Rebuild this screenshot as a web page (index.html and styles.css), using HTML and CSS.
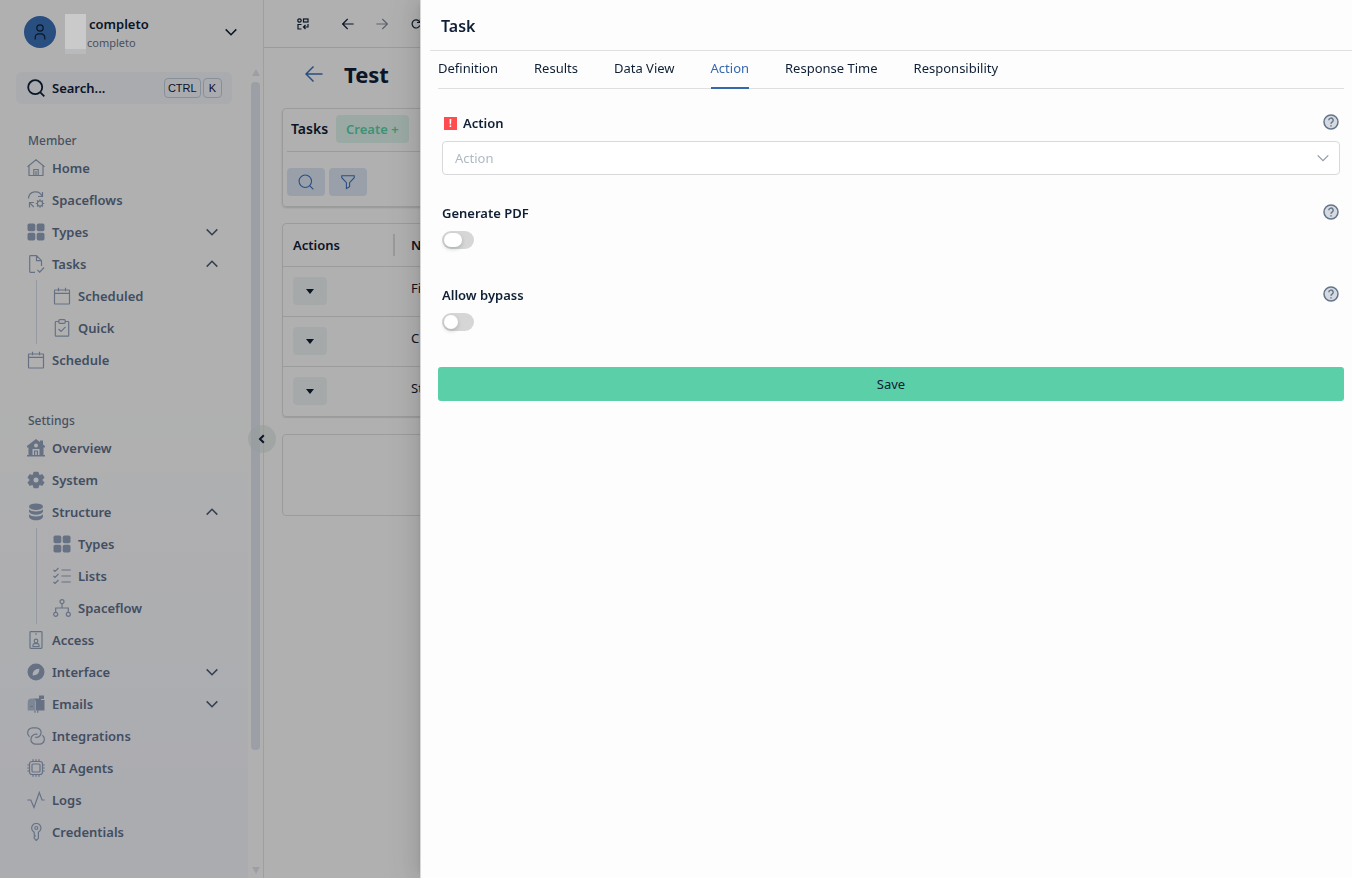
FILE: index.html
```html
<!DOCTYPE html>
<html lang="en">
<head>
    <meta charset="UTF-8">
    <meta name="viewport" content="width=device-width, initial-scale=1.0">
    <title>Task - Test</title>
    <link rel="stylesheet" href="styles.css">
</head>
<body>
    <!-- Icon set -->
    <svg class="sprite" aria-hidden="true">
        <symbol id="i-user" viewBox="0 0 18 18"><circle cx="9" cy="5" r="3.2"/><path d="M4.2 16.5v-2a3.6 3.6 0 0 1 3.6-3.6h2.4a3.6 3.6 0 0 1 3.6 3.6v2"/></symbol>
        <symbol id="i-down" viewBox="0 0 12 12"><path d="M.7 3.4 6 8.7l5.3-5.3"/></symbol>
        <symbol id="i-up" viewBox="0 0 12 12"><path d="M.7 8.6 6 3.3l5.3 5.3"/></symbol>
        <symbol id="i-search" viewBox="0 0 18 18"><circle cx="8.2" cy="8.2" r="7"/><path d="m13.3 13.3 4 4"/></symbol>
        <symbol id="i-home" viewBox="0 0 18 18"><path d="M.5 7.8 9 .8l8.5 7M2 7v9.500h14V7M6.800 16.500v-6h4.400v6M9 12v4.500"/></symbol>
        <symbol id="i-flow" viewBox="0 0 18 18"><path d="M1.500 7.500a7 7 0 0 1 13.500-2.200M15.500 1v4.500H11M2.500 16.500v-5H7M2.800 11.800l4 4.200"/><circle cx="13" cy="12.500" r="2.600"/><path d="M13 8.300v1.600M13 15.100v1.600M8.800 12.500h1.600M15.600 12.500h1.700M10 9.500l1.200 1.200M14.800 14.300l1.200 1.200M16 9.500l-1.200 1.200M11.200 14.300 10 15.500"/></symbol>
        <symbol id="i-grid" viewBox="0 0 18 18"><g class="solid"><rect x=".5" y=".5" width="7.800" height="7.800" rx="1.800"/><rect x="9.700" y=".5" width="7.800" height="7.800" rx="1.800"/><rect x=".5" y="9.700" width="7.800" height="7.800" rx="1.800"/><rect x="9.700" y="9.700" width="7.800" height="7.800" rx="1.800"/></g></symbol>
        <symbol id="i-file" viewBox="0 0 18 18"><path d="M8 17.300H3.500a.8.8 0 0 1-.8-.8v-15a.8.8 0 0 1 .8-.8h6l5 5V11M9.500.7v5h5M10.500 15l2.200 2.200 4.300-4.700"/></symbol>
        <symbol id="i-calendar" viewBox="0 0 18 18"><path d="M2 3h14a.5.5 0 0 1 .5.5v13a.5.5 0 0 1-.5.5H2a.5.5 0 0 1-.5-.5v-13A.5.5 0 0 1 2 3zM1.500 6.300h15M5.500.8v3.500M12.500.8v3.500"/></symbol>
        <symbol id="i-clipboard" viewBox="0 0 18 18"><path d="M5.500 2.500H3a.7.7 0 0 0-.7.7v13.300a.7.7 0 0 0 .7.7h12a.7.7 0 0 0 .7-.7V3.200a.7.7 0 0 0-.7-.7h-2.500M6.800.7h4.400a1 1 0 0 1 1 1v1.600a1 1 0 0 1-1 1H6.800a1 1 0 0 1-1-1V1.700a1 1 0 0 1 1-1zM5.500 10l2.500 2.500 4.500-4.700"/></symbol>
        <symbol id="i-house" viewBox="0 0 18 18"><path class="solid" fill-rule="evenodd" d="M9 0l4 3V1.500h3v4L18 7v1.500h-1.500V16H18v1.500H0V16h1.500V8.500H0V7zM9 4.500a2 2 0 1 0 0 4 2 2 0 0 0 0-4zM5.500 10v6H7v-4.500h4V16h1.500v-6zM8.200 12.500V16h1.600v-3.500z"/></symbol>
        <symbol id="i-gear" viewBox="0 0 18 18"><path class="solid gear" fill-rule="evenodd" d="M7 1.300h4l.5 2.400 1.300.8 2.300-.8 1.700 2.900-1.800 1.600v1.600l1.800 1.600-1.700 2.900-2.300-.8-1.300.8-.5 2.400H7l-.5-2.400-1.300-.8-2.300.8-1.700-2.900L3 9.800V8.200L1.200 6.600l1.700-2.900 2.300.8 1.300-.8zM9 5.900a3.100 3.100 0 1 0 0 6.200 3.100 3.100 0 0 0 0-6.200z"/></symbol>
        <symbol id="i-database" viewBox="0 0 18 18"><g class="solid"><ellipse cx="9" cy="3.700" rx="7" ry="3.300"/><path d="M2 6.200c2.500 3 11.500 3 14 0v2.500c-1.500 4-12.500 4-14 0z"/><path d="M2 11.200c2.500 3 11.500 3 14 0v2.700c-1.500 4.500-12.500 4.500-14 0z"/></g></symbol>
        <symbol id="i-list" viewBox="0 0 18 18"><path d="M.5 3l1.500 1.500 3.500-3.500M.5 9l1.500 1.500L5.500 7M.5 15l1.500 1.500L5.500 13M8.500 3h9.300M8.500 9h9.300M8.500 15h9.300"/></symbol>
        <symbol id="i-tree" viewBox="0 0 18 18"><circle cx="9" cy="2.700" r="2"/><circle cx="2.700" cy="15.300" r="2"/><circle cx="15.300" cy="15.300" r="2"/><path d="M9 4.700V9M2.700 13.300V9h12.600v4.300"/></symbol>
        <symbol id="i-badge" viewBox="0 0 18 18"><rect x="3" y=".7" width="12" height="16.600" rx=".8"/><path d="M8 3h2M6 15.500v-1.300a1.500 1.500 0 0 1 1.500-1.500h3a1.500 1.500 0 0 1 1.500 1.500v1.300z"/><circle cx="9" cy="10" r="1.800"/></symbol>
        <symbol id="i-compass" viewBox="0 0 18 18"><path class="solid" fill-rule="evenodd" d="M9 .5a8.500 8.500 0 1 0 0 17 8.500 8.500 0 0 0 0-17zM12.300 5.700c.2 3-1 6.300-5.300 6.600l-1.300.1c-.2-3.700 1.800-6.700 6.600-6.700z"/></symbol>
        <symbol id="i-mailbox" viewBox="0 0 18 18"><path class="solid" d="M4.500 3.500H12V.5h5v3.500h-3v1h3.500v10.500H9V8a4 4 0 0 0-4.500-4.500z"/><path class="tint" d="M.7 7.500a3.900 3.900 0 0 1 7.800 0v8H.7z"/><path d="M3 11.500h3M8 15.500v2.300M10.800 15.500v2.300"/></symbol>
        <symbol id="i-link" viewBox="0 0 18 18"><path d="M2.600 9.800A4.800 4.800 0 0 1 .7 5.600 4.800 4.800 0 0 1 5.500.8h3.800a4.800 4.800 0 0 1 0 9.600H8.200M15.400 8.200a4.800 4.800 0 0 1 1.900 4.200 4.800 4.800 0 0 1-4.800 4.800H8.700a4.800 4.800 0 0 1-4.800-4.800 5.200 5.200 0 0 1 5.100-5.200h1.500"/></symbol>
        <symbol id="i-chip" viewBox="0 0 18 18"><rect x="2.500" y="2.500" width="13" height="13" rx="2.500"/><rect x="5" y="5" width="8" height="8" rx="1"/><path d="M6 .3v2M9 .3v2M12 .3v2M6 15.700v2M9 15.700v2M12 15.700v2M.3 6h2M.3 9h2M.3 12h2M15.700 6h2M15.700 9h2M15.700 12h2"/></symbol>
        <symbol id="i-pulse" viewBox="0 0 18 18"><path d="M.3 9h3.500l3.200 7.500L12.300 1.500 15 9h2.700"/></symbol>
        <symbol id="i-key" viewBox="0 0 18 18"><path d="M7.200 9.200a4.600 4.600 0 1 1 4.200 0v6.100l-2.100 2.200-2.100-2.200v-1.500l1-.8-1-1z"/><circle cx="9.300" cy="5" r="1.500"/></symbol>
        <symbol id="i-panel" viewBox="0 0 12 12"><circle cx="2.500" cy="2.500" r="1.700"/><rect x="6.500" y="1" width="4.500" height="3"/><path d="M4.500 6.500H1v4.500h3.500M11 6v3H6.500M8.500 7l-2 2 2 2"/></symbol>
        <symbol id="i-left" viewBox="0 0 18 18"><path d="M17.500 9H1M8.500 1.500 1 9l7.500 7.500"/></symbol>
        <symbol id="i-right" viewBox="0 0 18 18"><path d="M.5 9H17M9.500 1.500 17 9l-7.500 7.500"/></symbol>
        <symbol id="i-reload" viewBox="0 0 12 12"><path d="M9.800 7.500A4 4 0 1 1 9 3.200L10.300 4.500M10.300 1.300v3.200H7"/></symbol>
        <symbol id="i-filter" viewBox="0 0 18 18"><path d="M2 2h14v2.200l-5.200 5.500v4.600l-3.600 2V9.700L2 4.200z"/></symbol>
        <symbol id="i-help" viewBox="0 0 16 16"><circle cx="8" cy="8" r="7"/><path d="M5.800 6.300a2.200 2.200 0 1 1 3.300 1.900C8.300 8.700 8 9 8 9.800M8 11.200v1.300"/></symbol>
    </svg>

    <div class="app">
        <aside class="sidebar">
            <div class="user">
                <span class="avatar"><svg class="icon"><use href="#i-user"/></svg></span>
                <span class="user-mask"></span>
                <div class="user-text">
                    <strong>completo</strong>
                    <small>completo</small>
                </div>
                <svg class="icon chevron"><use href="#i-down"/></svg>
            </div>

            <div class="sidebar-body">
                <nav class="nav">
                    <button type="button" class="search">
                        <svg class="icon"><use href="#i-search"/></svg>
                        <span>Search...</span>
                        <kbd>CTRL</kbd>
                        <kbd>K</kbd>
                    </button>

                    <div class="nav-section">
                        <h2>Member</h2>
                        <a href="#"><svg class="icon"><use href="#i-home"/></svg>Home</a>
                        <a href="#"><svg class="icon"><use href="#i-flow"/></svg>Spaceflows</a>
                        <a href="#"><svg class="icon"><use href="#i-grid"/></svg>Types<svg class="icon chevron"><use href="#i-down"/></svg></a>
                        <a href="#"><svg class="icon"><use href="#i-file"/></svg>Tasks<svg class="icon chevron"><use href="#i-up"/></svg></a>
                        <div class="submenu">
                            <a href="#"><svg class="icon"><use href="#i-calendar"/></svg>Scheduled</a>
                            <a href="#"><svg class="icon"><use href="#i-clipboard"/></svg>Quick</a>
                        </div>
                        <a href="#"><svg class="icon"><use href="#i-calendar"/></svg>Schedule</a>
                    </div>

                    <div class="nav-section">
                        <h2>Settings</h2>
                        <a href="#"><svg class="icon"><use href="#i-house"/></svg>Overview</a>
                        <a href="#"><svg class="icon"><use href="#i-gear"/></svg>System</a>
                        <a href="#"><svg class="icon"><use href="#i-database"/></svg>Structure<svg class="icon chevron"><use href="#i-up"/></svg></a>
                        <div class="submenu">
                            <a href="#"><svg class="icon"><use href="#i-grid"/></svg>Types</a>
                            <a href="#"><svg class="icon"><use href="#i-list"/></svg>Lists</a>
                            <a href="#"><svg class="icon"><use href="#i-tree"/></svg>Spaceflow</a>
                        </div>
                        <a href="#"><svg class="icon"><use href="#i-badge"/></svg>Access</a>
                        <a href="#"><svg class="icon"><use href="#i-compass"/></svg>Interface<svg class="icon chevron"><use href="#i-down"/></svg></a>
                        <a href="#"><svg class="icon"><use href="#i-mailbox"/></svg>Emails<svg class="icon chevron"><use href="#i-down"/></svg></a>
                        <a href="#"><svg class="icon"><use href="#i-link"/></svg>Integrations</a>
                        <a href="#"><svg class="icon"><use href="#i-chip"/></svg>AI Agents</a>
                        <a href="#"><svg class="icon"><use href="#i-pulse"/></svg>Logs</a>
                        <a href="#"><svg class="icon"><use href="#i-key"/></svg>Credentials</a>
                    </div>
                </nav>
                <div class="scrollbar">
                    <span class="arrow-up"></span>
                    <span class="thumb"></span>
                    <span class="arrow-down"></span>
                </div>
            </div>
            <button type="button" class="collapse" aria-label="Collapse menu">
                <svg viewBox="0 0 10 10"><path d="M6.800 1.200 3 5l3.800 3.800"/></svg>
            </button>
        </aside>

        <main class="main">
            <div class="toolbar">
                <button type="button" aria-label="Tabs"><svg class="icon"><use href="#i-panel"/></svg></button>
                <button type="button" aria-label="Back"><svg class="icon"><use href="#i-left"/></svg></button>
                <button type="button" aria-label="Forward" disabled><svg class="icon"><use href="#i-right"/></svg></button>
                <button type="button" aria-label="Reload"><svg class="icon"><use href="#i-reload"/></svg></button>
            </div>
            <div class="page-title">
                <a href="#" aria-label="Go back"><svg class="icon"><use href="#i-left"/></svg></a>
                <h1>Test</h1>
            </div>
            <section class="card tasks">
                <div class="tasks-head">
                    <h2>Tasks</h2>
                    <button type="button" class="create">Create +</button>
                </div>
                <div class="tasks-tools">
                    <button type="button" aria-label="Search"><svg class="icon"><use href="#i-search"/></svg></button>
                    <button type="button" aria-label="Filter"><svg class="icon"><use href="#i-filter"/></svg></button>
                </div>
            </section>
            <div class="card table-card">
                <table>
                    <thead>
                        <tr><th class="col-actions">Actions</th><th>Name</th></tr>
                    </thead>
                    <tbody>
                        <tr><td><button type="button" class="menu" aria-label="Actions"></button></td><td>First</td></tr>
                        <tr><td><button type="button" class="menu" aria-label="Actions"></button></td><td>Check</td></tr>
                        <tr><td><button type="button" class="menu" aria-label="Actions"></button></td><td>Start</td></tr>
                    </tbody>
                </table>
            </div>
            <div class="card blank"></div>
        </main>
    </div>

    <div class="overlay"></div>

    <div class="drawer" role="dialog" aria-labelledby="drawer-title">
        <header class="drawer-head">
            <h2 id="drawer-title">Task</h2>
        </header>
        <div class="drawer-body">
            <nav class="tabs">
                <a href="#">Definition</a>
                <a href="#">Results</a>
                <a href="#">Data View</a>
                <a href="#" class="active">Action</a>
                <a href="#">Response Time</a>
                <a href="#">Responsibility</a>
            </nav>
            <form>
                <div class="field">
                    <div class="field-head">
                        <span class="required">!</span>
                        <label for="action">Action</label>
                        <button type="button" class="help" aria-label="Help"><svg class="icon"><use href="#i-help"/></svg></button>
                    </div>
                    <div class="select">
                        <select id="action" name="action">
                            <option value="">Action</option>
                        </select>
                        <svg class="icon chevron"><use href="#i-down"/></svg>
                    </div>
                </div>
                <div class="field">
                    <div class="field-head">
                        <label for="pdf">Generate PDF</label>
                        <button type="button" class="help" aria-label="Help"><svg class="icon"><use href="#i-help"/></svg></button>
                    </div>
                    <input type="checkbox" class="switch pressed" id="pdf" name="pdf">
                </div>
                <div class="field">
                    <div class="field-head">
                        <label for="bypass">Allow bypass</label>
                        <button type="button" class="help" aria-label="Help"><svg class="icon"><use href="#i-help"/></svg></button>
                    </div>
                    <input type="checkbox" class="switch" id="bypass" name="bypass">
                </div>
                <button type="submit" class="save">Save</button>
            </form>
        </div>
    </div>
</body>
</html>
```
FILE: styles.css
```css
* {
    box-sizing: border-box;
}

body, h1, h2, button, input, select {
    margin: 0;
    padding: 0;
    font-family: "Noto Sans", "Open Sans", sans-serif;
}

body {
    height: 100vh;
    overflow: hidden;
    background: #fdfdfd;
    color: #0f2036;
    font-size: 13px;
    line-height: 20px;
}

a {
    color: inherit;
    text-decoration: none;
}

button {
    border: none;
    background: none;
    color: inherit;
    cursor: pointer;
}

.sprite {
    display: none;
}

/* Icons */
.icon {
    display: block;
    flex: none;
    width: 18px;
    height: 18px;
    fill: none;
    stroke: currentColor;
    stroke-width: 1.2;
}

.icon.chevron {
    width: 12px;
    height: 12px;
    margin-left: auto;
    stroke-width: 1.5;
}

.solid {
    fill: currentColor;
    stroke: none;
}

.gear {
    stroke: currentColor;
    stroke-linejoin: round;
}

.tint {
    fill: #b4c2d6;
    stroke: none;
}

.app {
    display: flex;
    height: 100%;
}

/* Sidebar */
.sidebar {
    position: relative;
    display: flex;
    flex-direction: column;
    flex: none;
    width: 264px;
    border-right: 1px solid #e2e4e8;
    background: linear-gradient(#fdfdfd 40%, #f4f6fd);
}

.user {
    display: flex;
    align-items: center;
    height: 64px;
    padding: 0 26px 0 24px;
}

.avatar {
    display: flex;
    align-items: center;
    justify-content: center;
    width: 32px;
    height: 32px;
    border-radius: 50%;
    background: #3b70b8;
}

.user-mask {
    position: relative;
    z-index: 2;
    width: 21px;
    height: 40px;
    margin: 4px 1px 0 9px;
    background: #cacaca;
    box-shadow: inset 0 -5px #b9babc;
}

.user-text {
    display: flex;
    flex-direction: column;
    padding-top: 2px;
}

.user-text strong {
    padding-left: 2px;
    font-weight: 600;
    line-height: 20px;
}

.user-text small {
    color: #68758a;
    font-size: 11px;
    line-height: 18px;
}

.sidebar-body {
    display: flex;
    flex: 1;
    min-height: 0;
}

.nav {
    flex: 1;
    padding: 8px 16px 0;
    overflow: hidden;
}

.search {
    display: flex;
    align-items: center;
    gap: 2px;
    width: 100%;
    height: 32px;
    margin-bottom: 24px;
    padding: 0 10px 0 11px;
    border-radius: 6px;
    background: #f4f5fb;
    font-size: 13px;
    font-weight: 600;
}

.search .icon {
    stroke-width: 1.8;
}

.search span {
    flex: 1;
    padding-left: 5px;
    text-align: left;
}

kbd {
    padding: 0 3px;
    border: 1px solid #c2cddb;
    border-radius: 4px;
    font-family: "Liberation Sans", Arial, sans-serif;
    font-size: 11px;
    font-weight: 400;
    line-height: 18px;
}

.search kbd + kbd {
    padding: 0 5px;
}

.nav-section + .nav-section {
    margin-top: 32px;
}

.nav-section h2 {
    padding: 2px 12px 0;
    color: #68758a;
    font-size: 12px;
    font-weight: 500;
    line-height: 22px;
}

.nav-section a {
    display: flex;
    align-items: center;
    gap: 7px;
    height: 32px;
    padding: 0 14px 0 11px;
    color: #5f708b;
    font-weight: 600;
}

.nav-section a .icon {
    color: #93a4be;
}

.nav-section a .chevron {
    color: #4c5b73;
}

.submenu {
    margin-left: 20px;
    border-left: 1px solid #d5dbe8;
}

.nav-section .submenu a {
    padding-left: 16px;
}

.scrollbar {
    display: flex;
    flex-direction: column;
    align-items: center;
    gap: 6px;
    width: 15px;
    padding: 5px 0 4px;
    background: #fdfdfd;
}

.arrow-up, .arrow-down {
    border: 4px solid transparent;
}

.arrow-up {
    border-top: 0;
    border-bottom: 7px solid #e0e4ee;
}

.arrow-down {
    margin-top: auto;
    border-top: 7px solid #e0e4ee;
    border-bottom: 0;
}

.thumb {
    width: 9px;
    height: 83%;
    border-radius: 4px;
    background: #e0e4ee;
}

.collapse {
    position: absolute;
    top: 50%;
    right: -13px;
    display: flex;
    align-items: center;
    justify-content: center;
    width: 28px;
    height: 28px;
    margin-top: -14px;
    border-radius: 50%;
    background: rgba(216, 226, 224, 0.6);
}

.collapse svg {
    width: 10px;
    height: 10px;
    fill: none;
    stroke: currentColor;
    stroke-width: 2;
}

/* Main page */
.main {
    flex: 1;
    min-width: 0;
}

.toolbar {
    display: flex;
    align-items: center;
    gap: 22px;
    height: 48px;
    padding-left: 33px;
    border-bottom: 1px solid #dcdfea;
}

.toolbar .icon {
    width: 12px;
    height: 12px;
}

.toolbar button:first-child {
    margin-right: 11px;
}

.toolbar button:disabled {
    opacity: 0.5;
}

.toolbar button:nth-child(2) .icon,
.toolbar button:nth-child(3) .icon {
    stroke-width: 1.8;
}

.page-title {
    display: flex;
    align-items: center;
    gap: 21px;
    height: 52px;
    padding-left: 41px;
}

.page-title a {
    color: #3d70b8;
}

.page-title .icon {
    stroke-width: 1.5;
}

h1 {
    font-size: 22px;
    font-weight: 700;
}

.card {
    margin: 0 18px;
    border: 1px solid #dfdfdf;
    border-radius: 4px;
}

.tasks {
    margin-top: 8px;
    padding: 0 4px;
    box-shadow: 0 1px 2px rgba(0, 0, 0, 0.15);
}

.tasks-head {
    display: flex;
    align-items: center;
    gap: 8px;
    height: 43px;
    padding: 0 0 2px 4px;
    border-bottom: 1px solid #dfdfdf;
}

.tasks-head h2 {
    font-size: 14px;
    font-weight: 600;
}

.create {
    height: 28px;
    padding: 0 10px;
    border-radius: 4px;
    background: #dff3ec;
    color: #5bd0a8;
    font-size: 13px;
    font-weight: 600;
}

.tasks-tools {
    display: flex;
    gap: 4px;
    padding: 16px 0 10px;
}

.tasks-tools button {
    display: flex;
    align-items: center;
    justify-content: center;
    width: 38px;
    height: 28px;
    border-radius: 4px;
    background: #dbe6f3;
    color: #3d70b8;
}

.tasks-tools .icon {
    width: 16px;
    height: 16px;
}

.table-card {
    margin-top: 16px;
    box-shadow: 0 1px 1px rgba(0, 0, 0, 0.12);
}

table {
    width: 100%;
    border-collapse: collapse;
    text-align: left;
}

th {
    height: 42px;
    padding: 0 10px;
    font-weight: 600;
}

th + th, td + td {
    padding-left: 16px;
}

.col-actions {
    width: 112px;
    background: linear-gradient(#dcdcdc, #dcdcdc) right center / 2px 22px no-repeat;
}

td {
    height: 50px;
    padding: 0 10px 6px;
    border-top: 1px solid #dfdfdf;
}

td:first-child {
    padding-bottom: 0;
}

.menu {
    display: flex;
    align-items: center;
    justify-content: center;
    width: 34px;
    height: 28px;
    border-radius: 4px;
    background: #eef3f2;
}

.menu::before {
    content: "";
    border: 4px solid transparent;
    border-top: 5px solid #0f2036;
    border-bottom: 0;
}

.blank {
    height: 82px;
    margin-top: 17px;
}

.overlay {
    position: fixed;
    inset: 0;
    z-index: 1;
    background: rgba(0, 0, 0, 0.3);
}

/* Task drawer */
.drawer {
    position: fixed;
    top: 0;
    right: 0;
    bottom: 0;
    left: 420px;
    z-index: 2;
    border-left: 1px solid #d8d8d8;
    background: #fdfdfd;
    box-shadow: -6px 0 16px rgba(0, 0, 0, 0.08), -3px 0 6px -4px rgba(0, 0, 0, 0.12), -9px 0 28px 8px rgba(0, 0, 0, 0.05);
}

.drawer-head {
    height: 51px;
    margin-left: 9px;
    padding: 0 11px;
    border-bottom: 1px solid #dfdfdf;
}

.drawer-head h2 {
    font-size: 16px;
    font-weight: 600;
    line-height: 52px;
}

.drawer-body {
    padding: 0 8px 0 17px;
}

.tabs {
    display: flex;
    gap: 36px;
    height: 38px;
    border-bottom: 1px solid #dfdfdf;
    line-height: 34px;
}

.tabs a {
    height: 38px;
}

.tabs .active {
    border-bottom: 2px solid #3668ae;
    color: #3668ae;
}

form {
    padding-top: 24px;
}

.field {
    margin: 0 4px 28px;
}

.field-head {
    display: flex;
    align-items: center;
    gap: 6px;
    height: 20px;
    margin-bottom: 8px;
}

.field-head label {
    font-weight: 600;
}

.required {
    width: 13px;
    height: 13px;
    margin-left: 2px;
    background: #ff4d4f;
    color: #fff;
    font-size: 10px;
    font-weight: 700;
    line-height: 13px;
    text-align: center;
}

.help {
    margin: 0 1px 2px auto;
}

.help .icon {
    width: 16px;
    height: 16px;
    color: #64748b;
    fill: #d5dae1;
    stroke-width: 1.5;
}

.select {
    position: relative;
}

.select select {
    display: block;
    width: 100%;
    height: 34px;
    padding: 0 12px;
    border: 1px solid #d9d9d9;
    border-radius: 4px;
    background: #fff;
    color: #b0b9c4;
    font-size: 13px;
    appearance: none;
}

.select .chevron {
    position: absolute;
    top: 11px;
    right: 11px;
    color: #8f99a6;
    stroke-width: 1.2;
    pointer-events: none;
}

/* Toggle switches */
.switch {
    display: block;
    width: 32px;
    height: 18px;
    margin-bottom: 36px;
    padding: 2px;
    border-radius: 9px;
    background: #d6d6d6;
    appearance: none;
    cursor: pointer;
}

.switch::before {
    content: "";
    display: block;
    width: 14px;
    height: 14px;
    border-radius: 7px;
    background: #fff;
    box-shadow: 0 2px 4px rgba(0, 35, 11, 0.2);
}

.switch.pressed::before {
    width: 18px;
}

.save {
    width: 100%;
    height: 34px;
    border-radius: 3px;
    background: #5bd0a8;
    font-size: 13px;
}
```
